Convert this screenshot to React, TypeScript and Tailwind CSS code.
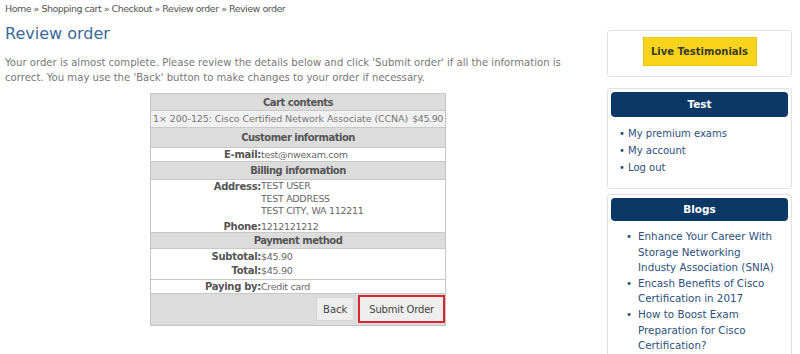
import React from "react";

const F = { fontFamily: '"DejaVu Sans", Verdana, sans-serif' };

function Header({ children, h = 17 }: { children: React.ReactNode; h?: number }) {
  return (
    <div
      className="bg-[#dcdcdc] border-t border-[#c8c8c8] text-center font-bold text-[#555] text-[10px] tracking-[-0.5px] flex items-center justify-center"
      style={{ height: h }}
    >
      {children}
    </div>
  );
}

function Row({ label, children }: { label: string; children: React.ReactNode }) {
  return (
    <div className="flex text-[9.5px] leading-[13px]">
      <div className="w-[110px] text-right font-bold text-[#555] shrink-0 text-[10px] tracking-[-0.3px]">{label}</div>
      <div className="text-[#666] tracking-[-0.3px]">{children}</div>
    </div>
  );
}

export default function App() {
  return (
    <div className="w-[800px] h-[354px] bg-white overflow-hidden flex" style={F}>
      <div className="w-[590px] pl-[5px] pt-[2px]">
        <div className="text-[9.5px] tracking-[-0.5px] text-[#555] leading-[13px]">
          Home » Shopping cart » Checkout » Review order » Review order
        </div>
        <h1 className="text-[16px] text-[#3a6a9a] mt-[8px] leading-[22px]">Review order</h1>
        <p className="text-[10.1px] text-[#777] leading-[15px] mt-[10px] w-[580px]">
          Your order is almost complete. Please review the details below and click 'Submit order' if all the information is correct. You may use the 'Back' button to make changes to your order if necessary.
        </p>
        <div className="ml-[145px] mt-[8px] w-[296px] border border-[#c4c4c4] border-t-0 bg-white">
          <Header h={17}>Cart contents</Header>
          <div className="bg-[#f0f0f0] border-t border-[#c8c8c8] text-[9.5px] tracking-[-0.1px] text-[#777] h-[17px] flex items-center px-[2px] whitespace-nowrap justify-between">
            <span>1× 200-125: Cisco Certified Network Associate (CCNA)</span>
            <span className="tracking-[-0.4px]">$45.90</span>
          </div>
          <Header h={20}>Customer information</Header>
          <div className="border-t border-[#c8c8c8] h-[14px] flex items-center">
            <Row label="E-mail:">test@nwexam.com</Row>
          </div>
          <Header h={18}>Billing information</Header>
          <div className="border-t border-[#c8c8c8] h-[53px] pt-[0px]">
            <Row label="Address:">
              <div className="leading-[12.5px]">
                TEST USER<br />TEST ADDRESS<br />TEST CITY, WA 112211
              </div>
            </Row>
            <div className="h-[2px]" />
            <Row label="Phone:">1212121212</Row>
          </div>
          <Header h={16}>Payment method</Header>
          <div className="border-t border-[#c8c8c8] h-[31px] pt-[1px] flex flex-col gap-[1px]">
            <Row label="Subtotal:">$45.90</Row>
            <Row label="Total:">$45.90</Row>
          </div>
          <div className="border-t border-[#c8c8c8] h-[14px] flex items-center">
            <Row label="Paying by:">Credit card</Row>
          </div>
          <div className="border-t border-[#c8c8c8] bg-[#dcdcdc] h-[32px] flex items-center justify-end pr-0 gap-[4px] pb-[1px]">
            <button className="h-[24px] px-[6px] bg-[#eeeeee] border border-[#d4d4d4] rounded-[2px] text-[10px] text-[#444]">Back</button>
            <button className="h-[28px] px-[9px] bg-[#eeeeee] border-2 border-[#d6262e] text-[10px] tracking-[-0.2px] text-[#444]">Submit Order</button>
          </div>
        </div>
      </div>
      <div className="w-[210px] pl-[17px] pt-[30px]">
        <div className="w-[185px] h-[47px] border border-[#e2e2e2] rounded-[3px] flex items-center justify-center">
          <div className="w-[114px] h-[29px] bg-[#f7d31a] border border-dotted border-[#e0b800] flex items-center justify-center font-bold text-[10px] text-[#3a3a2a] -mt-[4px]">
            Live Testimonials
          </div>
        </div>
        <div className="w-[185px] mt-[11px] border border-[#e2e2e2] rounded-[3px] p-[3px] pb-[12px]">
          <div className="h-[25px] bg-[#0c3866] rounded-[4px] text-white font-bold text-[10.5px] flex items-center justify-center">Test</div>
          <ul className="mt-[8px] pl-[8px] text-[10px] leading-[17px] text-[#2c4f7c]">
            <li>• My premium exams</li>
            <li>• My account</li>
            <li>• Log out</li>
          </ul>
        </div>
        <div className="w-[185px] mt-[5px] border border-[#e2e2e2] rounded-[3px] p-[3px]">
          <div className="h-[23px] bg-[#0c3866] rounded-[4px] text-white font-bold text-[10.5px] flex items-center justify-center">Blogs</div>
          <ul className="mt-[8px] pl-[15px] pr-[8px] text-[10.3px] leading-[15.6px] text-[#2c4f7c]">
            <li className="flex gap-[6px]"><span>•</span><span>Enhance Your Career With Storage Networking Industy Association (SNIA)</span></li>
            <li className="flex gap-[6px]"><span>•</span><span>Encash Benefits of Cisco Certification in 2017</span></li>
            <li className="flex gap-[6px]"><span>•</span><span>How to Boost Exam Preparation for Cisco Certification?</span></li>
          </ul>
        </div>
      </div>
    </div>
  );
}
